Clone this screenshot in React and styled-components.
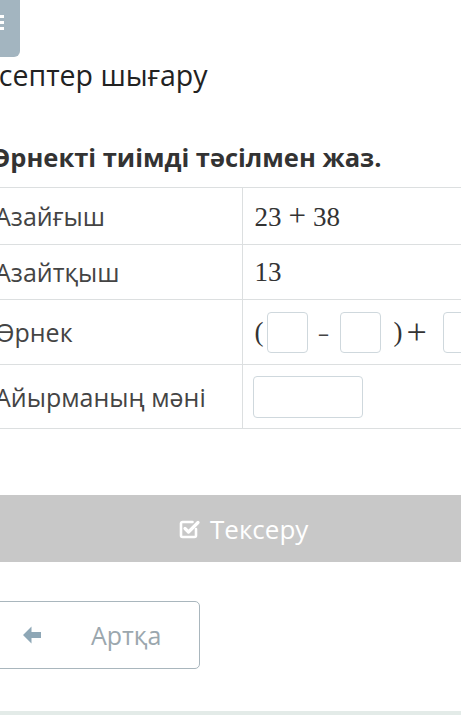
import React from 'react'
import styled, { createGlobalStyle } from 'styled-components'

const GlobalStyle = createGlobalStyle`
  html, body {
    margin: 0;
    padding: 0;
    background: #fff;
  }
  body {
    font-family: "Open Sans", "Noto Sans", sans-serif;
    color: #333;
  }
`

const App = () => {
  return (
    <Page>
      <GlobalStyle />
      <Shift>
        <TopBar>
          <MenuButton>
            <BarsIcon viewBox="0 0 20 20">
              <rect x="2" y="3" width="16" height="3" />
              <rect x="2" y="9" width="16" height="3" />
              <rect x="2" y="15" width="16" height="3" />
            </BarsIcon>
          </MenuButton>
        </TopBar>

        <Title>Есептер шығару</Title>
        <Task>Өрнекті тиімді тәсілмен жаз.</Task>

        <Table>
          <tbody>
            <Row h={57}>
              <Label>Азайғыш</Label>
              <Value>
                <Math>23<Op>+</Op>38</Math>
              </Value>
            </Row>
            <Row h={55}>
              <Label>Азайтқыш</Label>
              <Value><Math>13</Math></Value>
            </Row>
            <Row h={65}>
              <Label>Өрнек</Label>
              <Value>
                <Expr>
                  <Paren>(</Paren>
                  <Box />
                  <Minus>–</Minus>
                  <Box />
                  <Paren close>)</Paren>
                  <Plus>+</Plus>
                  <Box />
                </Expr>
              </Value>
            </Row>
            <Row h={64}>
              <Label>Айырманың мәні</Label>
              <Value><Box wide /></Value>
            </Row>
          </tbody>
        </Table>

        <CheckButton>
          <CheckIcon viewBox="0 0 24 24">
            <path d="M19 12v6.5a1.5 1.5 0 0 1-1.5 1.5h-12A1.5 1.5 0 0 1 4 18.5v-12A1.5 1.5 0 0 1 5.5 5h10" fill="none" strokeWidth="2.6" />
            <path d="M8 11.5l3.5 3.5L21 5.5" fill="none" strokeWidth="3.2" />
          </CheckIcon>
          Тексеру
        </CheckButton>

        <BackRow>
          <BackButton>
            <ArrowIcon viewBox="0 0 24 24">
              <path d="M11.5 3.5L3 12l8.5 8.5V15H21V9h-9.5z" />
            </ArrowIcon>
            <BackText>Артқа</BackText>
          </BackButton>
        </BackRow>
      </Shift>
      <Footer />
    </Page>
  )
}
export default App

const Page = styled.div`
  width: 461px;
  height: 715px;
  overflow: hidden;
  display: flex;
  flex-direction: column;
`

const Shift = styled.div`
  margin-left: -17px;
  width: 500px;
  flex: 1;
`

const TopBar = styled.div`
  display: flex;
  height: 57px;
`

const MenuButton = styled.div`
  width: 37px;
  height: 57px;
  background: #a3b5c0;
  border-radius: 0 0 6px 0;
  display: flex;
  align-items: flex-start;
  padding: 10px 0 0 3px;
  box-sizing: border-box;
`

const BarsIcon = styled.svg`
  width: 20px;
  height: 24px;
  fill: #fff;
`

const Title = styled.h1`
  margin: 0;
  font-size: 28.5px;
  font-weight: 400;
  line-height: 36px;
  color: #222;
`

const Task = styled.h2`
  margin: 0;
  padding: 48px 0 0 7px;
  font-size: 25.5px;
  font-weight: 700;
  line-height: 32px;
  color: #333;
`

const Table = styled.table`
  margin-top: 14px;
  border-collapse: collapse;
  width: 520px;
  border-top: 1px solid #dcdfe0;
`

const Row = styled.tr`
  height: ${({ h }) => h}px;
  border-bottom: 1px solid #dcdfe0;
`

const Label = styled.td`
  width: 259px;
  box-sizing: border-box;
  padding: 0 12px;
  font-size: 25px;
  color: #444;
  border-right: 1px solid #dcdfe0;
  vertical-align: middle;
`

const Value = styled.td`
  padding: 0 12px;
  vertical-align: middle;
`

const Math = styled.span`
  font-family: "Liberation Serif", "DejaVu Serif", serif;
  font-size: 27px;
  color: #333;
`

const Op = styled.span`
  padding: 0 7px;
  font-size: 31px;
`

const Expr = styled.div`
  display: flex;
  align-items: center;
  font-family: "Liberation Serif", "DejaVu Serif", serif;
  font-size: 27px;
  line-height: 1;
  color: #333;
`

const Paren = styled.span`
  padding: ${({ close }) => (close ? '0 0 0 13px' : '0 3px 0 0')};
`

const Minus = styled.span`
  width: 32px;
  text-align: center;
  font-family: "Open Sans", sans-serif;
  font-size: 22px;
  color: #444;
`

const Plus = styled.span`
  padding: 0 16px 0 4px;
  font-size: 36px;
  line-height: 1;
`

const Box = styled.div`
  width: ${({ wide }) => (wide ? '110px' : '41px')};
  height: ${({ wide }) => (wide ? '42px' : '41px')};
  box-sizing: border-box;
  border: 1px solid #cfd8dd;
  border-radius: 4px;
  background: #fff;
  margin-left: ${({ wide }) => (wide ? '-2px' : '0')};
`

const CheckButton = styled.div`
  margin-top: 66px;
  height: 67px;
  background: #c8c8c8;
  border-radius: 6px;
  display: flex;
  align-items: center;
  padding-left: 194px;
  box-sizing: border-box;
  gap: 9px;
  font-size: 26px;
  color: #fff;
`

const CheckIcon = styled.svg`
  width: 24px;
  height: 24px;
  stroke: #fff;
  stroke-linecap: round;
  stroke-linejoin: round;
`

const BackRow = styled.div`
  display: flex;
  padding-top: 39px;
`

const BackButton = styled.div`
  width: 217px;
  height: 68px;
  box-sizing: border-box;
  border: 1.5px solid #a9b6bd;
  border-radius: 5px;
  display: flex;
  align-items: center;
  padding-left: 36px;
`

const ArrowIcon = styled.svg`
  width: 24px;
  height: 24px;
  fill: #8ea7b6;
`

const BackText = styled.span`
  margin-left: 47px;
  font-size: 25px;
  color: #9ba7ae;
`

const Footer = styled.div`
  height: 4px;
  background: #e3ebe8;
`
